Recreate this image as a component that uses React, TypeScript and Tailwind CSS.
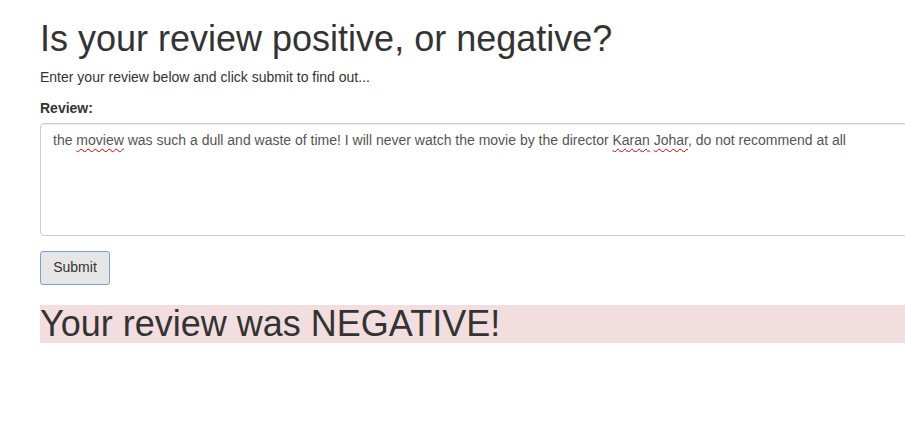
export default function App() {
  const sp = "underline decoration-wavy decoration-[#d00] decoration-[1px] underline-offset-[3px]";
  return (
    <div className="w-[905px] h-[428px] overflow-hidden bg-white text-[#333]" style={{ fontFamily: '"Liberation Sans", Arial, sans-serif' }}>
      <div className="w-[1100px] pl-[40px] pt-[19px]">
        <h1 className="text-[36px] leading-[1.1] font-normal m-0">Is your review positive, or negative?</h1>
        <p className="text-[14px] leading-[20px] mt-[8px] mb-0">Enter your review below and click submit to find out...</p>
        <div className="text-[14px] font-bold mt-[11px] leading-[20px]">Review:</div>
        <div className="mt-[5px] h-[113px] border border-[#ccc] rounded-[4px] px-[12px] py-[6px] text-[14px] leading-[20px] text-[#555] shadow-[inset_0_1px_1px_rgba(0,0,0,0.075)]">
          the <span className={sp}>moview</span> was such a dull and waste of time! I will never watch the movie by the director <span className={sp}>Karan</span> <span className={sp}>Johar</span>, do not recommend at all
        </div>
        <button className="mt-[15px] h-[34px] w-[70px] bg-[#e6e6e6] border border-[#7a9ed8] rounded-[3px] text-[14px] text-[#333]">Submit</button>
        <div className="mt-[20px] h-[38px] bg-[#f2dede] text-[36px] leading-[38px]">Your review was NEGATIVE!</div>
      </div>
    </div>
  );
}
